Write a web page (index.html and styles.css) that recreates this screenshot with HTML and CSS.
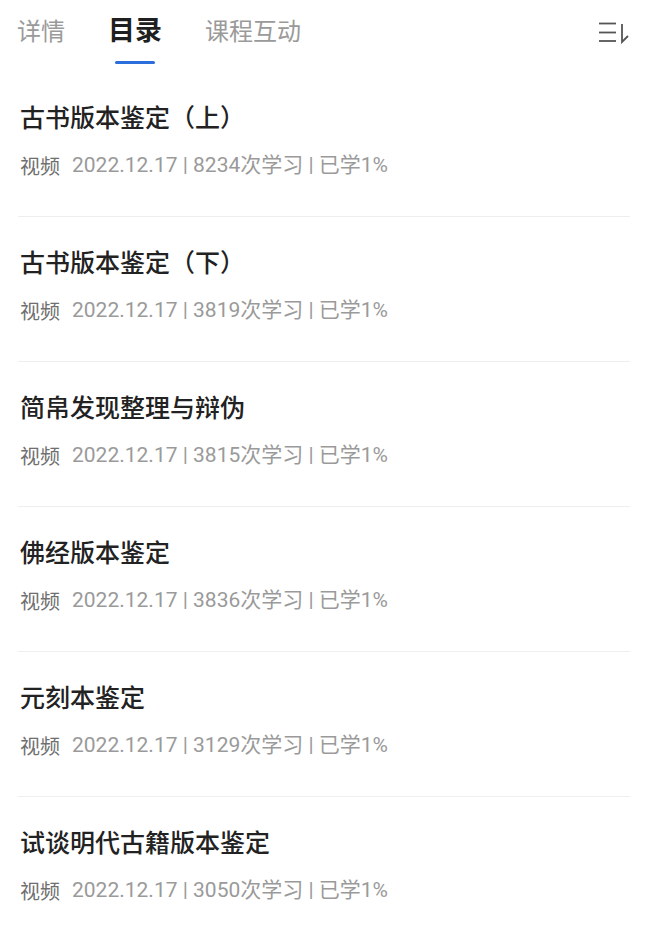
FILE: index.html
```html
<!DOCTYPE html>
<html lang="zh-CN">
<head>
<meta charset="utf-8">
<link rel="stylesheet" href="styles.css">
</head>
<body>
<div class="tabs">
  <div class="tab">详情</div>
  <div class="tab active">目录</div>
  <div class="tab">课程互动</div>
  <div class="spacer"></div>
  <svg class="sort" width="32" height="24" viewBox="0 0 32 24">
    <g stroke="#555" stroke-width="1.8" fill="none" stroke-linecap="butt">
      <line x1="1" y1="3.5" x2="18" y2="3.5"/>
      <line x1="1" y1="12.5" x2="18" y2="12.5"/>
      <line x1="1" y1="21" x2="18" y2="21"/>
      <polyline points="24,4 24,22 30,16" stroke-linejoin="miter"/>
    </g>
  </svg>
</div>
<ul class="list">
  <li class="item"><div class="title">古书版本鉴定（上）</div><div class="meta"><span class="type">视频</span><span>2022.12.17 | 8234次学习 | 已学1%</span></div></li>
  <li class="item"><div class="title">古书版本鉴定（下）</div><div class="meta"><span class="type">视频</span><span>2022.12.17 | 3819次学习 | 已学1%</span></div></li>
  <li class="item"><div class="title">简帛发现整理与辩伪</div><div class="meta"><span class="type">视频</span><span>2022.12.17 | 3815次学习 | 已学1%</span></div></li>
  <li class="item"><div class="title">佛经版本鉴定</div><div class="meta"><span class="type">视频</span><span>2022.12.17 | 3836次学习 | 已学1%</span></div></li>
  <li class="item"><div class="title">元刻本鉴定</div><div class="meta"><span class="type">视频</span><span>2022.12.17 | 3129次学习 | 已学1%</span></div></li>
  <li class="item"><div class="title">试谈明代古籍版本鉴定</div><div class="meta"><span class="type">视频</span><span>2022.12.17 | 3050次学习 | 已学1%</span></div></li>
</ul>
</body>
</html>
```
FILE: styles.css
```css
html, body {
  margin: 0;
  padding: 0;
  background: #fff;
  font-family: Roboto, "Noto Sans CJK SC", sans-serif;
}
.tabs {
  height: 72px;
  display: flex;
  align-items: flex-start;
  padding: 0 0 0 17px;
  box-sizing: border-box;
}
.tab {
  position: relative;
  font-size: 24px;
  line-height: 32px;
  margin-top: 16px;
  color: #9a9a9a;
  margin-right: 43px;
}
.tab.active {
  color: #1f1f1f;
  font-size: 27px;
  font-weight: 700;
  margin-top: 15px;
}
.tab.active::after {
  content: "";
  position: absolute;
  left: 7px;
  width: 40px;
  height: 3px;
  top: 46px;
  border-radius: 2px;
  background: #2b6fdc;
}
.spacer { flex: 1; }
.sort {
  margin-top: 20px;
  margin-right: 20px;
}
.list {
  list-style: none;
  margin: 0 20px 0 18px;
  padding: 0;
}
.item {
  padding: 27px 0 37px 2px;
  border-bottom: 1px solid #eeeeee;
}
.title {
  font-family: "Noto Sans CJK SC", sans-serif;
  font-size: 25px;
  line-height: 34px;
  height: 34px;
  color: #222;
  font-weight: 500;
}
.meta {
  display: flex;
  align-items: center;
  height: 27px;
  margin-top: 19px;
  font-family: Roboto, "Noto Sans CJK SC", sans-serif;
  font-size: 21px;
  line-height: 27px;
  color: #9a9a9a;
  white-space: pre;
}
.type {
  font-family: "Noto Sans CJK SC", sans-serif;
  font-size: 20px;
  color: #6f6f6f;
  margin-right: 12px;
}
```
